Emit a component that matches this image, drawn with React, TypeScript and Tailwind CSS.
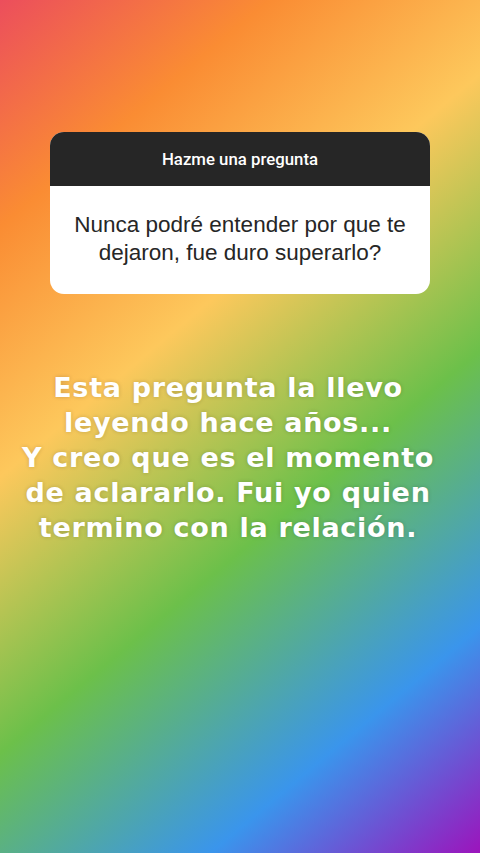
export default function App() {
  return (
    <div className="flex h-[853px] w-full flex-col items-center overflow-hidden bg-[linear-gradient(140deg,#ec4e5c_0%,#fa8c33_18%,#fdc85c_38%,#6cc04a_60%,#3a95ec_82%,#9c14bc_100%)] pt-[132px]">
      {/* question sticker */}
      <div className="w-[380px] overflow-hidden rounded-[14px] bg-white">
        <div className="flex h-[54px] items-center justify-center bg-[#262626] pt-[2px] font-['Roboto',sans-serif] text-[16.8px] font-medium text-white">
          Hazme una pregunta
        </div>
        <div className="flex h-[108px] items-center justify-center px-3 pb-[2px] text-center font-['Liberation_Sans',sans-serif] text-[22.5px] leading-[28px] text-[#262626]">
          Nunca podré entender por que te dejaron, fue duro superarlo?
        </div>
      </div>

      {/* story text */}
      <p className="mt-[76px] w-full pr-[24px] text-center font-['DejaVu_Sans',sans-serif] text-[27px] font-bold leading-[35px] tracking-[0.7px] text-white [text-shadow:0_0_4px_rgba(0,0,0,0.18)]">
        Esta pregunta la llevo
        <br />
        leyendo hace años...
        <br />
        Y creo que es el momento
        <br />
        de aclararlo. Fui yo quien
        <br />
        termino con la relación.
      </p>
    </div>
  );
}
